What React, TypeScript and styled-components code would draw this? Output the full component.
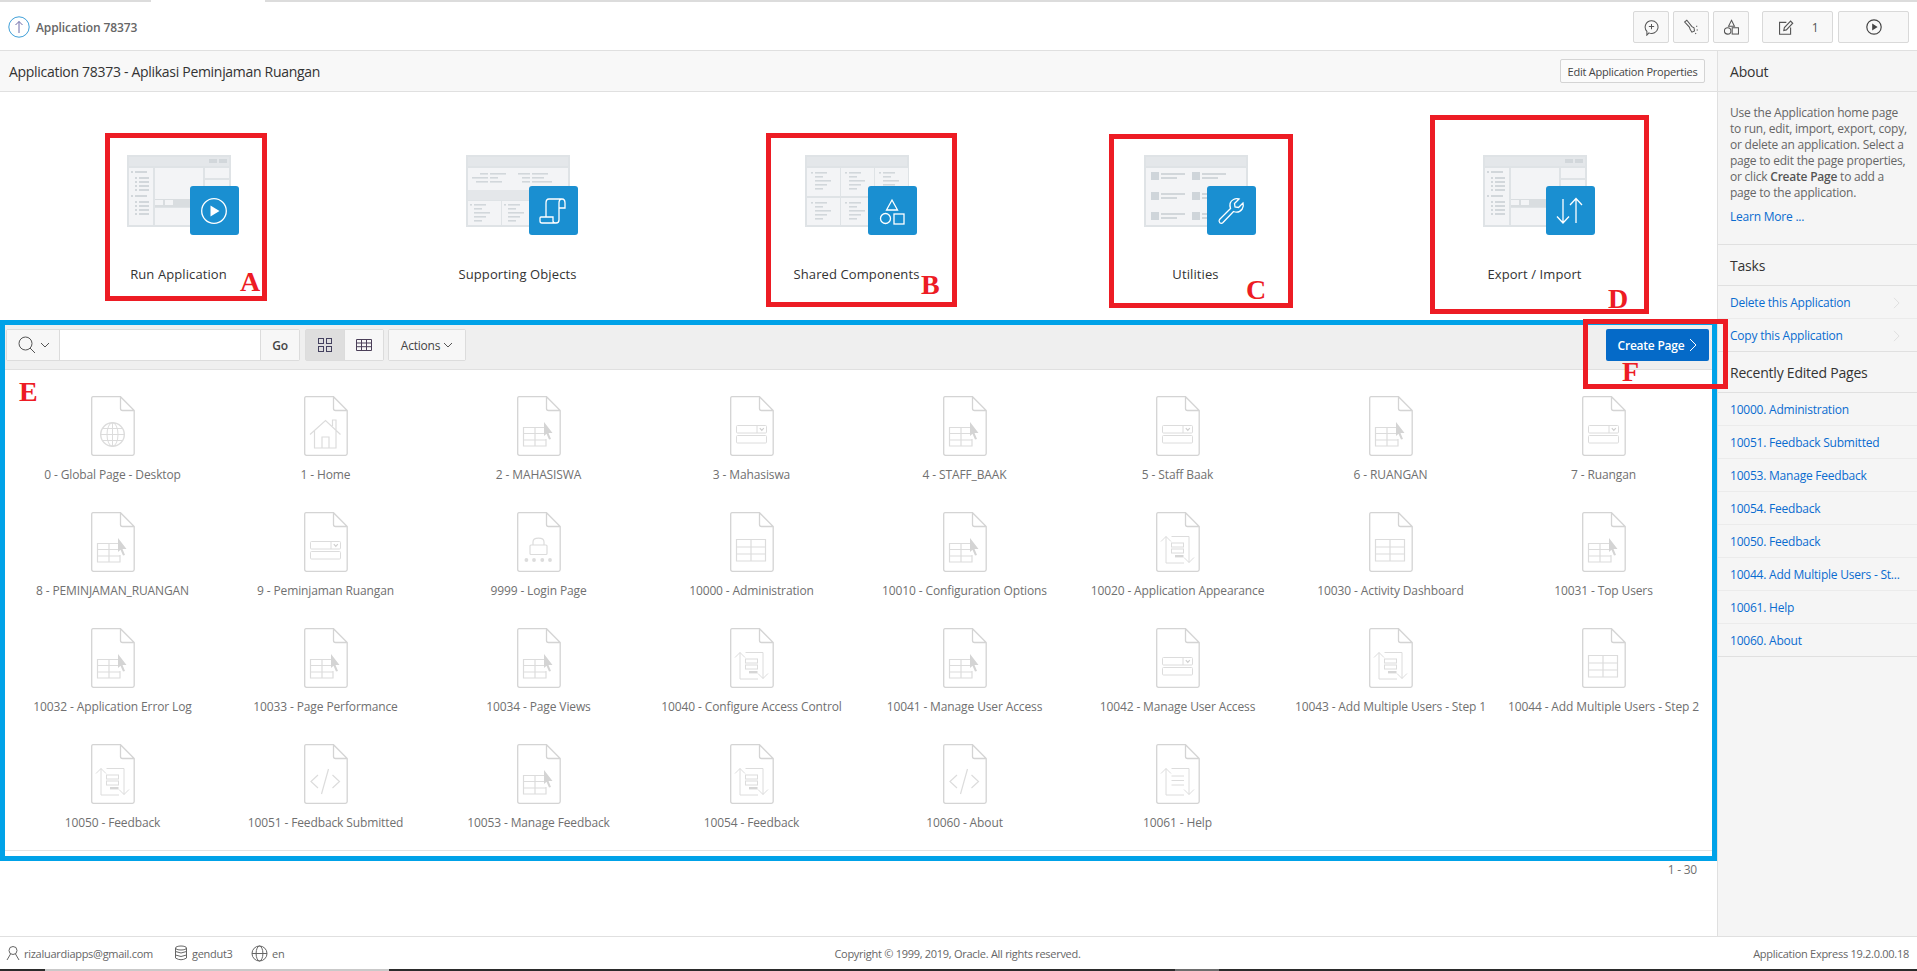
import React from "react";
import styled, { createGlobalStyle } from "styled-components";

const FONT = `"Open Sans", "Noto Sans", sans-serif`;

const Global = createGlobalStyle`
  html, body { margin: 0; padding: 0; background: #fff; height: 100%; overflow: hidden; }
  * { box-sizing: border-box; }
  body { font-family: ${FONT}; font-size: 12px; color: #404040; letter-spacing: -0.22px; }
`;

const Page = styled.div`
  position: relative;
  width: 1917px;
  height: 971px;
  display: flex;
  flex-direction: column;
  overflow: hidden;
`;

const Strip = styled.div`
  height: 2px;
  flex: none;
  display: flex;
`;
const StripPart = styled.div<{ $w?: number; $c: string }>`
  ${(p) => (p.$w ? `width:${p.$w}px;flex:none;` : "flex:1;")}
  background: ${(p) => p.$c};
`;

const Header = styled.header`
  height: 49px;
  flex: none;
  border-bottom: 1px solid #e0e0e0;
  display: flex;
  align-items: center;
  padding: 0 8px 0 8px;
`;
const UpLink = styled.div`
  display: flex;
  align-items: center;
  gap: 6px;
  font-weight: 600;
  color: #666;
  font-size: 12px;
  letter-spacing: -0.1px;
  margin-top: 2px;
`;
const HeaderTools = styled.div`
  margin-left: auto;
  display: flex;
  align-items: center;
  margin-top: 2px;
`;
const ToolBtn = styled.div<{ $w: number; $ml?: number }>`
  width: ${(p) => p.$w}px;
  height: 32px;
  margin-left: ${(p) => p.$ml ?? 0}px;
  border: 1px solid #d9d9d9;
  border-radius: 2px;
  background: #f8f8f8;
  display: flex;
  align-items: center;
  justify-content: center;
  gap: 18px;
  color: #555;
  font-size: 12px;
`;

const Body = styled.div`
  flex: 1;
  display: flex;
  min-height: 0;
`;
const Main = styled.main`
  width: 1717px;
  flex: none;
  display: flex;
  flex-direction: column;
`;
const TitleBar = styled.div`
  height: 41px;
  flex: none;
  background: #f8f8f8;
  border-bottom: 1px solid #e0e0e0;
  display: flex;
  align-items: center;
  justify-content: space-between;
  padding: 0 12px 0 9px;
`;
const Title = styled.h1`
  margin: 0;
  font-size: 14px;
  font-weight: 400;
  color: #333;
  letter-spacing: -0.3px;
`;
const SmallBtn = styled.div`
  width: 145px;
  height: 24px;
  border: 1px solid #d4d4d4;
  border-radius: 2px;
  background: #fbfbfb;
  display: flex;
  align-items: center;
  justify-content: center;
  font-size: 11px;
  color: #444;
`;

const Cards = styled.div`
  height: 230px;
  flex: none;
  display: grid;
  grid-template-columns: repeat(5, 339px);
  padding: 63px 0 0 9px;
`;
const Card = styled.div`
  display: flex;
  flex-direction: column;
  align-items: center;
`;
const Illustration = styled.div`
  position: relative;
  width: 104px;
  height: 72px;
`;
const Badge = styled.div`
  position: absolute;
  left: 63px;
  top: 31px;
  width: 49px;
  height: 49px;
  border-radius: 3px;
  background: #1a8fd1;
  display: flex;
  align-items: center;
  justify-content: center;
`;
const CardLabel = styled.div`
  margin-top: 37px;
  line-height: 20px;
  font-size: 13px;
  color: #333;
  letter-spacing: 0.1px;
`;

const Toolbar = styled.div`
  height: 48px;
  flex: none;
  background: #efefef;
  border-bottom: 1px solid #e0e0e0;
  display: flex;
  align-items: flex-start;
  padding: 7px 8px 0 6px;
`;
const Group = styled.div<{ $ml?: number }>`
  display: flex;
  height: 32px;
  margin-left: ${(p) => p.$ml ?? 0}px;
  border: 1px solid #dcdcdc;
  border-radius: 2px;
`;
const GroupBtn = styled.div<{ $w: number; $on?: boolean; $bold?: boolean; $white?: boolean }>`
  width: ${(p) => p.$w}px;
  display: flex;
  align-items: center;
  justify-content: center;
  gap: 3px;
  background: ${(p) => (p.$on ? "#dedede" : p.$white ? "#fff" : "#f7f7f7")};
  border-right: 1px solid #dcdcdc;
  font-weight: ${(p) => (p.$bold ? 600 : 400)};
  color: #444;
  font-size: 12px;
  &:last-child { border-right: 0; }
`;
const CreateBtn = styled.div`
  margin-left: auto;
  width: 103px;
  height: 32px;
  border-radius: 2px;
  background: #056ac8;
  color: #fff;
  font-weight: 600;
  font-size: 12px;
  display: flex;
  align-items: center;
  justify-content: center;
  gap: 5px;
`;

const Pages = styled.div`
  flex: none;
  height: 481px;
  border-bottom: 1px solid #e4e4e4;
  display: grid;
  grid-template-columns: repeat(8, 213px);
  grid-auto-rows: 116px;
  padding: 26px 0 0 6px;
`;
const PageItem = styled.div`
  display: flex;
  flex-direction: column;
  align-items: center;
`;
const PageLabel = styled.div`
  margin-top: 11px;
  line-height: 16px;
  color: #707070;
  white-space: nowrap;
  letter-spacing: -0.12px;
`;
const Pagination = styled.div`
  text-align: right;
  padding: 11px 20px 0 0;
  line-height: 16px;
  color: #707070;
`;

const Side = styled.aside`
  flex: 1;
  background: #f5f5f5;
  border-left: 1px solid #e0e0e0;
`;
const SideHead = styled.h2<{ $h: number }>`
  margin: 0;
  height: ${(p) => p.$h}px;
  padding-left: 12px;
  font-size: 14px;
  font-weight: 400;
  color: #333;
  border-bottom: 1px solid #e0e0e0;
  display: flex;
  align-items: center;
`;
const About = styled.div`
  padding: 13px 10px 19px 12px;
  border-bottom: 1px solid #e0e0e0;
  line-height: 16px;
  color: #666;
  height: 153px;
`;
const Strong = styled.b`
  font-weight: 600;
  color: #555;
`;
const MoreLink = styled.div`
  margin-top: 8px;
  color: #0a6cd0;
`;
const SideRow = styled.div<{ $strong?: boolean }>`
  height: 33px;
  padding: 1px 17px 0 12px;
  display: flex;
  align-items: center;
  justify-content: space-between;
  color: #0a6cd0;
  white-space: nowrap;
  border-bottom: 1px solid ${(p) => (p.$strong ? "#e0e0e0" : "#ebebeb")};
`;

const Footer = styled.footer`
  height: 33px;
  flex: none;
  border-top: 1px solid #e0e0e0;
  display: grid;
  grid-template-columns: 1fr auto 1fr;
  align-items: center;
  padding: 0 8px 0 6px;
  font-size: 11px;
  color: #666;
  letter-spacing: -0.28px;
`;
const FootLeft = styled.div`
  display: flex;
  align-items: center;
`;
const FootItem = styled.div<{ $w: number }>`
  width: ${(p) => p.$w}px;
  display: flex;
  align-items: center;
  gap: 4px;
`;
const FootRight = styled.div`
  text-align: right;
`;

const BottomBar = styled.div`
  height: 2px;
  flex: none;
  display: flex;
`;

/* Red and blue annotations drawn over the screenshot */
const Mark = styled.div<{ $x: number; $y: number; $w: number; $h: number; $c: string }>`
  position: absolute;
  left: ${(p) => p.$x}px;
  top: ${(p) => p.$y}px;
  width: ${(p) => p.$w}px;
  height: ${(p) => p.$h}px;
  border: 5px solid ${(p) => p.$c};
  pointer-events: none;
`;
const MarkLetter = styled.div<{ $x: number; $y: number }>`
  position: absolute;
  left: ${(p) => p.$x}px;
  top: ${(p) => p.$y}px;
  font-family: "Liberation Serif", serif;
  font-weight: 700;
  font-size: 28px;
  line-height: 28px;
  letter-spacing: 0;
  color: #ed1c24;
`;

type Variant = "app" | "support" | "shared" | "util";
const FR = "#dfe3e6";
const BG = "#f3f4f6";
const LN = "#d2d7db";

const Lines = ({ x, y, w }: { x: number; y: number; w: number[] }) => (
  <>
    {w.map((n, i) => (
      <rect key={i} x={x} y={y + i * 4} width={n} height={1.6} fill={LN} />
    ))}
  </>
);

const Art = ({ v }: { v: Variant }) => (
  <svg width="104" height="72" viewBox="0 0 104 72">
    <rect x="0" y="0" width="104" height="72" fill={FR} />
    <rect x="2" y="2" width="100" height="9" fill="#e4e7ea" />
    {v === "app" && (
      <>
        <rect x="82" y="4" width="8" height="4" fill="#d2d7db" />
        <rect x="92" y="4" width="8" height="4" fill="#d2d7db" />
        <rect x="2" y="13" width="24" height="57" fill={BG} />
        <rect x="28" y="13" width="48" height="31" fill={BG} />
        <rect x="28" y="44" width="48" height="8" fill="#d9dde0" />
        <rect x="28" y="45" width="8" height="5" fill={BG} />
        <rect x="38" y="45" width="8" height="5" fill={BG} />
        <rect x="28" y="53" width="48" height="17" fill={BG} />
        <rect x="78" y="13" width="24" height="10" fill={BG} />
        <rect x="78" y="25" width="24" height="45" fill={BG} />
        <rect x="4" y="16" width="2" height="2" fill={LN} />
        <rect x="8" y="16" width="12" height="2" fill={LN} />
        <rect x="4" y="40" width="2" height="2" fill={LN} />
        <rect x="8" y="40" width="12" height="2" fill={LN} />
        {[22, 26, 30, 34, 46, 50, 54, 58].map((y) => (
          <g key={y}>
            <rect x="8" y={y} width="2" height="2" fill={LN} />
            <rect x="12" y={y} width="10" height="2" fill={LN} />
          </g>
        ))}
      </>
    )}
    {v === "support" && (
      <>
        <rect x="2" y="13" width="100" height="22" fill={BG} />
        <rect x="2" y="35" width="100" height="10" fill="#e4e7ea" />
        <rect x="2" y="46" width="33" height="24" fill={BG} />
        <rect x="36" y="46" width="66" height="24" fill={BG} />
        <Lines x={14} y={18} w={[8]} />
        <rect x="24" y="18" width="16" height="1.6" fill={LN} />
        <rect x="6" y="22" width="16" height="1.6" fill={LN} />
        <rect x="24" y="22" width="8" height="1.6" fill={LN} />
        <rect x="10" y="26" width="12" height="1.6" fill={LN} />
        <rect x="24" y="26" width="12" height="1.6" fill={LN} />
        <rect x="52" y="18" width="12" height="1.6" fill={LN} />
        <rect x="66" y="18" width="16" height="1.6" fill={LN} />
        <rect x="56" y="22" width="8" height="1.6" fill={LN} />
        <rect x="66" y="22" width="12" height="1.6" fill={LN} />
        <rect x="56" y="26" width="8" height="1.6" fill={LN} />
        <rect x="66" y="26" width="20" height="1.6" fill={LN} />
        <rect x="4" y="49" width="2" height="1.6" fill={LN} />
        <Lines x={8} y={49} w={[12, 8, 16, 12, 8]} />
        <rect x="38" y="49" width="2" height="1.6" fill={LN} />
        <Lines x={42} y={49} w={[12, 8, 16, 12, 8]} />
      </>
    )}
    {v === "shared" && (
      <>
        {[2, 36, 70].map((x) => (
          <g key={x}>
            <rect x={x} y="13" width="33" height="28" fill={BG} />
            <rect x={x + 4} y="17" width="2" height="1.6" fill={LN} />
            <Lines x={x + 8} y={17} w={[12, 8, 16, 12, 8]} />
            <rect x={x} y="43" width="33" height="27" fill={BG} />
            <rect x={x + 4} y="47" width="2" height="1.6" fill={LN} />
            <Lines x={x + 8} y={47} w={[12, 8, 16, 12, 8]} />
          </g>
        ))}
      </>
    )}
    {v === "util" && (
      <>
        <rect x="2" y="13" width="100" height="57" fill={BG} />
        {[17, 37, 57].map((y) =>
          [7, 48].map((x) => (
            <g key={x}>
              <rect x={x} y={y} width="8" height="8" fill="#cfd5da" />
              <rect x={x + 10} y={y + 1} width={24} height="2" fill={LN} />
              <rect x={x + 10} y={y + 5} width={16} height="2" fill={LN} />
            </g>
          ))
        )}
      </>
    )}
  </svg>
);

const BadgeIcon = ({ k }: { k: string }) => (
  <svg width="32" height="32" viewBox="0 0 32 32" fill="none" stroke="#fff" strokeWidth="1.3">
    {k === "play" && (
      <>
        <circle cx="16" cy="16" r="12.3" />
        <path d="M12.5 10.5 L21.5 16 L12.5 21.5 Z" fill="#fff" stroke="none" />
      </>
    )}
    {k === "scroll" && (
      <path d="M5 28 H19 Q22 28 22 25 V8 Q22 4 25 4 H12 Q9 4 9 8 V22 M5 28 Q3 28 3 26 V23 Q3 22 4 22 H16 V26 Q16 28 19 28 M25 4 Q28 4 28 8 V13 H22" />
    )}
    {k === "shapes" && (
      <>
        <path d="M16 5 L21.5 15 H10.5 Z" />
        <circle cx="9.5" cy="23.5" r="5" />
        <rect x="18" y="19" width="10" height="10" />
      </>
    )}
    {k === "wrench" && (
      <path d="M4.5 24.5 L15.5 13.5 Q13.5 7 18.5 4.5 Q21 3.2 24 4 L19.5 8.5 L20 12 L23.5 12.5 L28 8 Q29 11.5 27.2 14 Q24 18.5 18.5 16.5 L8 27.5 Q6.5 29 4.8 27.7 Q3.3 26.2 4.5 24.5 Z" />
    )}
    {k === "updown" && (
      <>
        <path d="M9 4 V28 M3 21.5 L9 28 L15 21.5" />
        <path d="M22 28 V3.5 M16 10 L22 3.5 L28 10" />
      </>
    )}
  </svg>
);

type PK = "globe" | "home" | "tc" | "form" | "login" | "grid" | "wiz" | "code" | "help";
const PS = "#dcdcdc";

const PageIcon = ({ k }: { k: PK }) => (
  <svg width="44" height="60" viewBox="0 0 44 60" fill="none" stroke={PS} strokeWidth="1">
    <path
      d="M2 .7 H29.5 L43.2 14.5 V57.5 Q43.2 59.3 41.4 59.3 H2.5 Q.7 59.3 .7 57.5 V2.5 Q.7 .7 2 .7 Z M29.5 .7 V12.5 Q29.5 14.5 31.5 14.5 H43.2"
      stroke="#d4d4d4"
      strokeWidth="1.3"
    />
    {k === "globe" && (
      <>
        <circle cx="21.5" cy="38.5" r="11.8" strokeWidth="1.4" />
        <ellipse cx="21.5" cy="38.5" rx="5.5" ry="11.8" />
        <path d="M21.5 26.7 V50.3 M10 38.5 H33 M11.5 32.5 H31.5 M11.5 44.5 H31.5" />
      </>
    )}
    {k === "home" && (
      <path d="M6 38.5 L21.5 24.5 L36.5 38.5 M10.5 35 V52 H32 V34.5 M32 34 V24 H28.5 V30 M18 52 V41 H25 V52" strokeWidth="1.2" />
    )}
    {k === "tc" && (
      <>
        <path d="M29 38 V31.5 H6.5 V50 H29 V43 M6.5 37.5 H27 M6.5 44 H29 M18 31.5 V50" strokeWidth="1.2" />
        <path d="M27 26 L35.5 37 L31.5 37 L34 43 L32 43.5 L29.5 37.8 L27 40 Z" fill="#d4d4d4" stroke="none" />
      </>
    )}
    {k === "form" && (
      <>
        <rect x="6.5" y="29.5" width="30" height="7.5" rx="1" />
        <path d="M27 29.5 V37" />
        <path d="M29.8 32.2 L31.8 34.4 L33.8 32.2" strokeWidth="1.2" stroke="#cfcfcf" />
        <rect x="6.5" y="39.5" width="30" height="7.5" rx="1" />
      </>
    )}
    {k === "login" && (
      <>
        <rect x="13" y="33" width="17" height="9.5" rx="1" strokeWidth="1.2" />
        <path d="M16 33 V30 Q16 26.2 21.5 26.2 Q27 26.2 27 30 V33" strokeWidth="1.2" />
        {[9.4, 17, 25.3, 33].map((x) => (
          <circle key={x} cx={x} cy="48" r="1.9" fill={PS} stroke="none" />
        ))}
      </>
    )}
    {k === "grid" && (
      <path d="M6.5 27.5 H35.5 V49 H6.5 Z M21 27.5 V49 M6.5 35 H35.5 M6.5 42 H35.5" strokeWidth="1.2" />
    )}
    {(k === "wiz" || k === "help") && (
      <path d="M10 51 V24.5 M5 29.5 L10 24.5 L15 29.5 M15.5 24.5 H33 V50.5 M28 45.5 L33 50.5 L38 45.5 M10 51 H28" strokeWidth="1" />
    )}
    {k === "wiz" && (
      <>
        <rect x="15.5" y="31" width="12" height="4" />
        <rect x="15.5" y="37" width="12" height="4" />
        <rect x="19" y="43" width="8.5" height="2.4" fill="#d6d6d6" stroke="none" />
      </>
    )}
    {k === "help" && <path d="M15.5 32 H28 M15.5 36.5 H28 M15.5 41 H28" />}
    {k === "code" && (
      <path d="M14 31 L7 37.5 L14 44 M28.5 31 L35.5 37.5 L28.5 44 M24.5 25 L17.5 50" strokeWidth="1.2" />
    )}
  </svg>
);

const pageList: [string, PK][] = [
  ["0 - Global Page - Desktop", "globe"],
  ["1 - Home", "home"],
  ["2 - MAHASISWA", "tc"],
  ["3 - Mahasiswa", "form"],
  ["4 - STAFF_BAAK", "tc"],
  ["5 - Staff Baak", "form"],
  ["6 - RUANGAN", "tc"],
  ["7 - Ruangan", "form"],
  ["8 - PEMINJAMAN_RUANGAN", "tc"],
  ["9 - Peminjaman Ruangan", "form"],
  ["9999 - Login Page", "login"],
  ["10000 - Administration", "grid"],
  ["10010 - Configuration Options", "tc"],
  ["10020 - Application Appearance", "wiz"],
  ["10030 - Activity Dashboard", "grid"],
  ["10031 - Top Users", "tc"],
  ["10032 - Application Error Log", "tc"],
  ["10033 - Page Performance", "tc"],
  ["10034 - Page Views", "tc"],
  ["10040 - Configure Access Control", "wiz"],
  ["10041 - Manage User Access", "tc"],
  ["10042 - Manage User Access", "form"],
  ["10043 - Add Multiple Users - Step 1", "wiz"],
  ["10044 - Add Multiple Users - Step 2", "grid"],
  ["10050 - Feedback", "wiz"],
  ["10051 - Feedback Submitted", "code"],
  ["10053 - Manage Feedback", "tc"],
  ["10054 - Feedback", "wiz"],
  ["10060 - About", "code"],
  ["10061 - Help", "help"],
];

const cards: [string, Variant, string][] = [
  ["Run Application", "app", "play"],
  ["Supporting Objects", "support", "scroll"],
  ["Shared Components", "shared", "shapes"],
  ["Utilities", "util", "wrench"],
  ["Export / Import", "app", "updown"],
];

const recent = [
  "10000. Administration",
  "10051. Feedback Submitted",
  "10053. Manage Feedback",
  "10054. Feedback",
  "10050. Feedback",
  "10044. Add Multiple Users - St...",
  "10061. Help",
];

const boxes: [number, number, number, number, string][] = [
  [0, 320, 1717, 541, "#00a2e8"],
  [105, 133, 162, 168, "#ed1c24"],
  [766, 133, 191, 174, "#ed1c24"],
  [1109, 134, 184, 174, "#ed1c24"],
  [1430, 115, 219, 199, "#ed1c24"],
  [1583, 319, 145, 70, "#ed1c24"],
];

const letters: [string, number, number][] = [
  ["A", 240, 268],
  ["B", 921, 271],
  ["C", 1246, 276],
  ["D", 1608, 285],
  ["E", 19, 378],
  ["F", 1622, 358],
];

const Chevron = ({ c = "#555", s = 10 }: { c?: string; s?: number }) => (
  <svg width={s} height={s} viewBox="0 0 10 10" fill="none" stroke={c} strokeWidth="1">
    <path d="M1 3 L5 7 L9 3" />
  </svg>
);
const ChevronRight = ({ c, w, h }: { c: string; w: number; h: number }) => (
  <svg width={w} height={h} viewBox="0 0 8 14" fill="none" stroke={c} strokeWidth="1">
    <path d="M1 1 L7 7 L1 13" />
  </svg>
);

export default function App() {
  return (
    <Page>
      <Global />
      <Strip>
        <StripPart $w={151} $c="#dcdcdc" />
        <StripPart $w={114} $c="#ffffff" />
        <StripPart $c="#dcdcdc" />
      </Strip>
      <Header>
        <UpLink>
          <svg width="22" height="22" viewBox="0 0 22 22" fill="none">
            <circle cx="11" cy="11" r="10.2" stroke="#3f9fd8" strokeWidth="1" />
            <path d="M11 17 V5.5 M7.5 9 L11 5.5 L14.5 9" stroke="#6d6aa8" strokeWidth="1" />
          </svg>
          Application 78373
        </UpLink>
        <HeaderTools>
          <ToolBtn $w={36}>
            <svg width="17" height="17" viewBox="0 0 20 20" fill="none" stroke="#555" strokeWidth="1.2">
              <path d="M10 2 A7.5 7.5 0 1 1 7 16.3 L4.5 19 L4.6 14.6 A7.5 7.5 0 0 1 10 2 Z M10 5.8 V12 M6.9 8.9 H13.1" />
            </svg>
          </ToolBtn>
          <ToolBtn $w={36} $ml={4}>
            <svg width="17" height="17" viewBox="0 0 20 20" fill="none" stroke="#555" strokeWidth="1.2">
              <path d="M2 3.5 L4.5 1.5 L10.5 9 L13 10.5 L13.5 14 L10.5 15.5 L8.5 12.5 L7.5 9.5 Z" />
              <path d="M15.5 9 L17 8 M16 13 H18 M14.5 16.5 L15.5 18" strokeDasharray="1.5 1" />
            </svg>
          </ToolBtn>
          <ToolBtn $w={36} $ml={4}>
            <svg width="17" height="17" viewBox="0 0 20 20" fill="none" stroke="#555" strokeWidth="1.2">
              <path d="M10 1.5 L13.5 8.5 H6.5 Z" />
              <circle cx="5.5" cy="14" r="3.8" />
              <rect x="10.8" y="10.3" width="7.4" height="7.4" />
            </svg>
          </ToolBtn>
          <ToolBtn $w={71} $ml={13}>
            <svg width="17" height="17" viewBox="0 0 20 20" fill="none" stroke="#555" strokeWidth="1.3">
              <path d="M11 4 H3 V18 H16 V10 M8 13.5 L8.7 10 L16 2.5 L18.5 5 L11 12.8 Z" />
            </svg>
            1
          </ToolBtn>
          <ToolBtn $w={71} $ml={5}>
            <svg width="18" height="18" viewBox="0 0 20 20" fill="none" stroke="#444" strokeWidth="1.3">
              <circle cx="10" cy="10" r="8" />
              <path d="M8 6 L14 10 L8 14 Z" fill="#444" stroke="none" />
            </svg>
          </ToolBtn>
        </HeaderTools>
      </Header>
      <Body>
        <Main>
          <TitleBar>
            <Title>Application 78373 - Aplikasi Peminjaman Ruangan</Title>
            <SmallBtn>Edit Application Properties</SmallBtn>
          </TitleBar>
          <Cards>
            {cards.map(([label, v, icon]) => (
              <Card key={label}>
                <Illustration>
                  <Art v={v} />
                  <Badge>
                    <BadgeIcon k={icon} />
                  </Badge>
                </Illustration>
                <CardLabel>{label}</CardLabel>
              </Card>
            ))}
          </Cards>
          <Toolbar>
            <Group>
              <GroupBtn $w={53}>
                <svg width="20" height="20" viewBox="0 0 20 20" fill="none" stroke="#555" strokeWidth="1">
                  <circle cx="8.5" cy="8.5" r="6.5" />
                  <path d="M13 13 L18 18" />
                </svg>
                <Chevron />
              </GroupBtn>
              <GroupBtn $w={201} $white />
              <GroupBtn $w={38} $bold>Go</GroupBtn>
            </Group>
            <Group $ml={5}>
              <GroupBtn $w={39} $on>
                <svg width="16" height="16" viewBox="0 0 16 16" fill="none" stroke="#43405f" strokeWidth="1">
                  <rect x="1.5" y="1.5" width="5" height="5" />
                  <rect x="9.5" y="1.5" width="5" height="5" />
                  <rect x="1.5" y="9.5" width="5" height="5" />
                  <rect x="9.5" y="9.5" width="5" height="5" />
                </svg>
              </GroupBtn>
              <GroupBtn $w={38}>
                <svg width="16" height="12" viewBox="0 0 16 12" fill="none" stroke="#4b3f58" strokeWidth="1">
                  <path d="M.5 .5 H15.5 V11.5 H.5 Z M.5 4 H15.5 M.5 7.7 H15.5 M5.5 .5 V11.5 M10.5 .5 V11.5" />
                </svg>
              </GroupBtn>
            </Group>
            <Group $ml={4}>
              <GroupBtn $w={76}>
                Actions
                <Chevron />
              </GroupBtn>
            </Group>
            <CreateBtn>
              Create Page
              <ChevronRight c="#fff" w={8} h={14} />
            </CreateBtn>
          </Toolbar>
          <Pages>
            {pageList.map(([label, k]) => (
              <PageItem key={label}>
                <PageIcon k={k} />
                <PageLabel>{label}</PageLabel>
              </PageItem>
            ))}
          </Pages>
          <Pagination>1 - 30</Pagination>
        </Main>
        <Side>
          <SideHead $h={41}>About</SideHead>
          <About>
            Use the Application home page to run, edit, import, export, copy, or delete an application. Select a page to edit the page properties, or click <Strong>Create Page</Strong> to add a page to the application.
            <MoreLink>Learn More ...</MoreLink>
          </About>
          <SideHead $h={41}>Tasks</SideHead>
          <SideRow>
            Delete this Application
            <ChevronRight c="#dcdcdc" w={7} h={12} />
          </SideRow>
          <SideRow $strong>
            Copy this Application
            <ChevronRight c="#dcdcdc" w={7} h={12} />
          </SideRow>
          <SideHead $h={41}>Recently Edited Pages</SideHead>
          {recent.map((r) => (
            <SideRow key={r}>{r}</SideRow>
          ))}
          <SideRow $strong>10060. About</SideRow>
        </Side>
      </Body>
      <Footer>
        <FootLeft>
          <FootItem $w={168}>
            <svg width="14" height="16" viewBox="0 0 14 16" fill="none" stroke="#666" strokeWidth="1">
              <circle cx="7" cy="5.5" r="4" />
              <path d="M4.5 9 L1 15 M9.5 9 L13 15" />
            </svg>
            rizaluardiapps@gmail.com
          </FootItem>
          <FootItem $w={77}>
            <svg width="14" height="16" viewBox="0 0 14 16" fill="none" stroke="#666" strokeWidth="1">
              <ellipse cx="7" cy="3" rx="5.5" ry="2" />
              <path d="M1.5 3 V13 Q7 16.5 12.5 13 V3 M1.5 6.5 Q7 9.5 12.5 6.5 M1.5 10 Q7 13 12.5 10" />
            </svg>
            gendut3
          </FootItem>
          <FootItem $w={50}>
            <svg width="17" height="17" viewBox="0 0 17 17" fill="none" stroke="#666" strokeWidth="1">
              <circle cx="8.5" cy="8.5" r="7.5" />
              <ellipse cx="8.5" cy="8.5" rx="3.4" ry="7.5" />
              <path d="M1 8.5 H16" />
            </svg>
            en
          </FootItem>
        </FootLeft>
        <div>Copyright © 1999, 2019, Oracle. All rights reserved.</div>
        <FootRight>Application Express 19.2.0.00.18</FootRight>
      </Footer>
      <BottomBar>
        <StripPart $w={45} $c="#2b2b2b" />
        <StripPart $w={344} $c="#c9c9c9" />
        <StripPart $w={786} $c="#2b2b2b" />
        <StripPart $w={44} $c="#6e6e6e" />
        <StripPart $c="#2b2b2b" />
      </BottomBar>

      {boxes.map(([x, y, w, h, c]) => (
        <Mark key={`${x}-${y}`} $x={x} $y={y} $w={w} $h={h} $c={c} />
      ))}
      {letters.map(([t, x, y]) => (
        <MarkLetter key={t} $x={x} $y={y}>{t}</MarkLetter>
      ))}
    </Page>
  );
}
